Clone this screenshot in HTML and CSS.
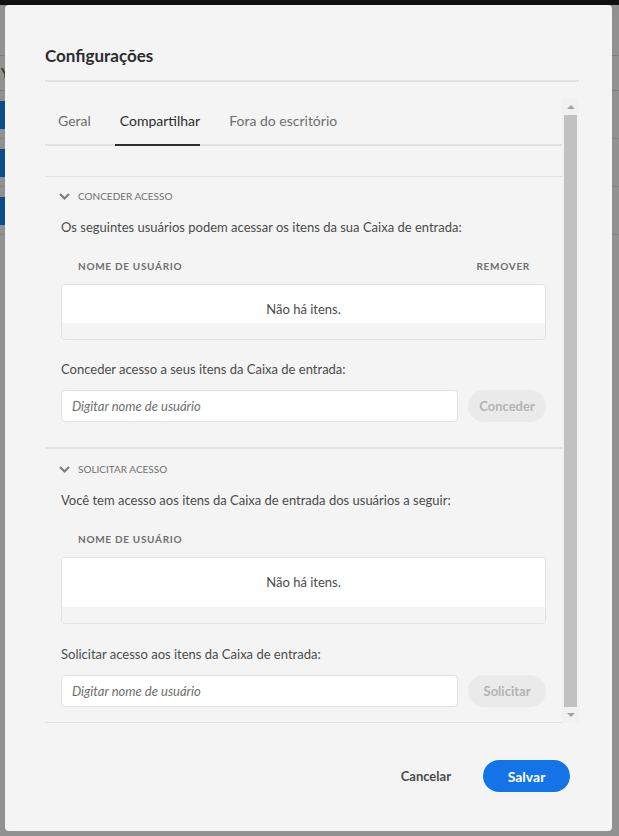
FILE: index.html
```html
<!DOCTYPE html>
<html lang="pt-BR">
<head>
<meta charset="utf-8">
<title>Configurações</title>
<link rel="stylesheet" href="styles.css">
</head>
<body>
<div class="app">
  <div class="topbar"></div>
  <div class="app-header"></div>
  <div class="app-subheader"><span class="app-y">Y</span></div>
  <div class="app-row"><span class="app-badge"></span></div>
  <div class="app-row"><span class="app-badge"></span></div>
  <div class="app-row"><span class="app-badge"></span></div>
</div>

<div class="dialog" role="dialog" aria-labelledby="dlg-title">
  <h2 class="dialog-title" id="dlg-title">Configurações</h2>
  <div class="dialog-divider"></div>

  <div class="dialog-scroll">
    <div class="scroll-content">
      <div class="tabs">
        <div class="tab">Geral</div>
        <div class="tab active">Compartilhar</div>
        <div class="tab">Fora do escritório</div>
      </div>

      <div class="tab-panel">
        <section class="accordion">
          <div class="acc-header">
            <svg class="chevron" width="11" height="7" viewBox="0 0 11 7"><path d="M1 1 L5.5 5.5 L10 1" fill="none" stroke="#7a7a7a" stroke-width="2"/></svg>
            <span>Conceder acesso</span>
          </div>
          <p class="desc">Os seguintes usuários podem acessar os itens da sua Caixa de entrada:</p>
          <div class="table-head"><span>Nome de usuário</span><span>Remover</span></div>
          <div class="table-box">
            <div class="table-body">Não há itens.</div>
            <div class="table-foot"></div>
          </div>
          <p class="desc field-label">Conceder acesso a seus itens da Caixa de entrada:</p>
          <div class="input-row">
            <input class="text-input" type="text" placeholder="Digitar nome de usuário">
            <button class="btn-disabled" disabled>Conceder</button>
          </div>
        </section>

        <section class="accordion second">
          <div class="acc-header">
            <svg class="chevron" width="11" height="7" viewBox="0 0 11 7"><path d="M1 1 L5.5 5.5 L10 1" fill="none" stroke="#7a7a7a" stroke-width="2"/></svg>
            <span>Solicitar acesso</span>
          </div>
          <p class="desc">Você tem acesso aos itens da Caixa de entrada dos usuários a seguir:</p>
          <div class="table-head"><span>Nome de usuário</span></div>
          <div class="table-box">
            <div class="table-body tall">Não há itens.</div>
            <div class="table-foot"></div>
          </div>
          <p class="desc field-label">Solicitar acesso aos itens da Caixa de entrada:</p>
          <div class="input-row">
            <input class="text-input" type="text" placeholder="Digitar nome de usuário">
            <button class="btn-disabled" disabled>Solicitar</button>
          </div>
        </section>
      </div>
    </div>

    <div class="scrollbar" aria-hidden="true">
      <div class="sb-btn"><span class="tri-up"></span></div>
      <div class="sb-thumb"></div>
      <div class="sb-btn"><span class="tri-down"></span></div>
    </div>
  </div>

  <div class="dialog-footer">
    <button class="btn-quiet">Cancelar</button>
    <button class="btn-cta">Salvar</button>
  </div>
</div>
</body>
</html>
```

FILE: styles.css
```css
* { box-sizing: border-box; }

html, body {
  margin: 0;
  height: 100%;
}

body {
  background: #919191;
  font-family: Lato, "Open Sans", sans-serif;
  overflow: hidden;
}

/* background application (dimmed) */
.app {
  width: 100%;
}
.topbar {
  height: 5px;
  background: #111111;
}
.app-header {
  height: 51px;
  border-bottom: 1px solid #7f7f7f;
}
.app-subheader {
  height: 35px;
  border-bottom: 1px solid #7f7f7f;
  display: flex;
  align-items: center;
}
.app-y {
  font-size: 13px;
  color: #333;
  margin-left: 1px;
  font-weight: 700;
}
.app-row {
  height: 48px;
  border-bottom: 1px solid #868686;
  padding-top: 10px;
}
.app-badge {
  display: block;
  width: 40px;
  height: 28px;
  background: #0e4a8e;
}

/* dialog */
.dialog {
  position: fixed;
  left: 5px;
  top: 5px;
  width: 607px;
  height: 826px;
  background: #f4f4f4;
  border-radius: 4px;
  padding: 40px 33px 0 40px;
  display: flex;
  flex-direction: column;
}

.dialog-title {
  margin: 0;
  font-size: 17px;
  line-height: 22px;
  font-weight: 700;
  color: #2c2c2c;
}

.dialog-divider {
  height: 2px;
  background: #e1e1e1;
  margin-top: 13px;
}

.dialog-scroll {
  margin-top: 16px;
  height: 625px;
  display: flex;
}

.scroll-content {
  flex: 1;
  overflow: hidden;
  border-bottom: 1px solid #e1e1e1;
}

/* tabs */
.tabs {
  display: flex;
  gap: 29px;
  height: 48px;
  border-bottom: 2px solid #e1e1e1;
  padding-left: 13px;
}
.tab {
  position: relative;
  height: 46px;
  line-height: 46px;
  font-size: 14px;
  color: #6e6e6e;
}
.tab.active {
  color: #2c2c2c;
}
.tab.active::after {
  content: "";
  position: absolute;
  left: -5px;
  right: 0;
  bottom: -2px;
  height: 2px;
  background: #2c2c2c;
}

.tab-panel {
  padding-top: 30px;
}

/* accordion */
.accordion {
  border-top: 1px solid #e1e1e1;
  border-bottom: 1px solid #e1e1e1;
  padding: 0 16px 25px 16px;
}

.acc-header {
  height: 38px;
  display: flex;
  align-items: center;
  gap: 8px;
  margin-left: -2px;
  font-size: 10px;
  text-transform: uppercase;
  color: #707070;
}
.second .acc-header {
  height: 40px;
}
.chevron {
  display: block;
}

.desc {
  margin: 2px 0 0 0;
  font-size: 13px;
  line-height: 20px;
  color: #4b4b4b;
}
.second .acc-header + .desc {
  margin-top: 1px;
}

.table-head {
  display: flex;
  justify-content: space-between;
  margin-top: 21px;
  padding: 0 16px 0 17px;
  font-size: 10px;
  line-height: 16px;
  font-weight: 700;
  letter-spacing: 0.07em;
  text-transform: uppercase;
  color: #6e6e6e;
}

.table-box {
  margin-top: 10px;
  border: 1px solid #e1e1e1;
  border-radius: 4px;
  overflow: hidden;
}
.table-body {
  height: 38px;
  padding-top: 14px;
  background: #ffffff;
  text-align: center;
  font-size: 13px;
  line-height: 20px;
  color: #4b4b4b;
}
.table-body.tall {
  height: 49px;
}
.table-foot {
  height: 16px;
  background: #f4f4f4;
}

.field-label {
  margin-top: 19px;
}
.second .field-label {
  margin-top: 20px;
}

.input-row {
  display: flex;
  gap: 10px;
  margin-top: 11px;
}
.text-input {
  flex: 1;
  height: 32px;
  border: 1px solid #e1e1e1;
  border-radius: 4px;
  background: #ffffff;
  padding: 0 10px;
  font-family: inherit;
  font-size: 13px;
  font-style: italic;
  color: #4b4b4b;
  outline: none;
}
.text-input::placeholder {
  color: #6e6e6e;
  font-style: italic;
}

.btn-disabled {
  width: 78px;
  height: 32px;
  border: none;
  border-radius: 16px;
  background: #eaeaea;
  color: #b3b3b3;
  font-family: inherit;
  font-size: 13px;
  font-weight: 700;
  padding: 0;
}

/* fake scrollbar */
.scrollbar {
  width: 17px;
  background: #f1f1f1;
  display: flex;
  flex-direction: column;
}
.sb-btn {
  height: 17px;
  display: flex;
  align-items: center;
  justify-content: center;
}
.sb-btn:last-child {
  height: 16px;
}
.tri-up {
  width: 0;
  height: 0;
  border-left: 4px solid transparent;
  border-right: 4px solid transparent;
  border-bottom: 4px solid #a3a3a3;
}
.tri-down {
  width: 0;
  height: 0;
  border-left: 4px solid transparent;
  border-right: 4px solid transparent;
  border-top: 4px solid #a3a3a3;
}
.sb-thumb {
  flex: 1;
  margin: 0 2px;
  background: #c1c1c1;
}

/* footer */
.dialog-footer {
  display: flex;
  justify-content: flex-end;
  align-items: center;
  gap: 18px;
  margin-top: 37px;
  margin-right: 9px;
}
.btn-quiet {
  border: none;
  background: transparent;
  padding: 0 14px;
  height: 32px;
  font-family: inherit;
  font-size: 13px;
  font-weight: 700;
  color: #4b4b4b;
}
.btn-cta {
  width: 87px;
  height: 32px;
  border: none;
  border-radius: 16px;
  background: #1473e6;
  color: #ffffff;
  font-family: inherit;
  font-size: 14px;
  font-weight: 700;
}
```
